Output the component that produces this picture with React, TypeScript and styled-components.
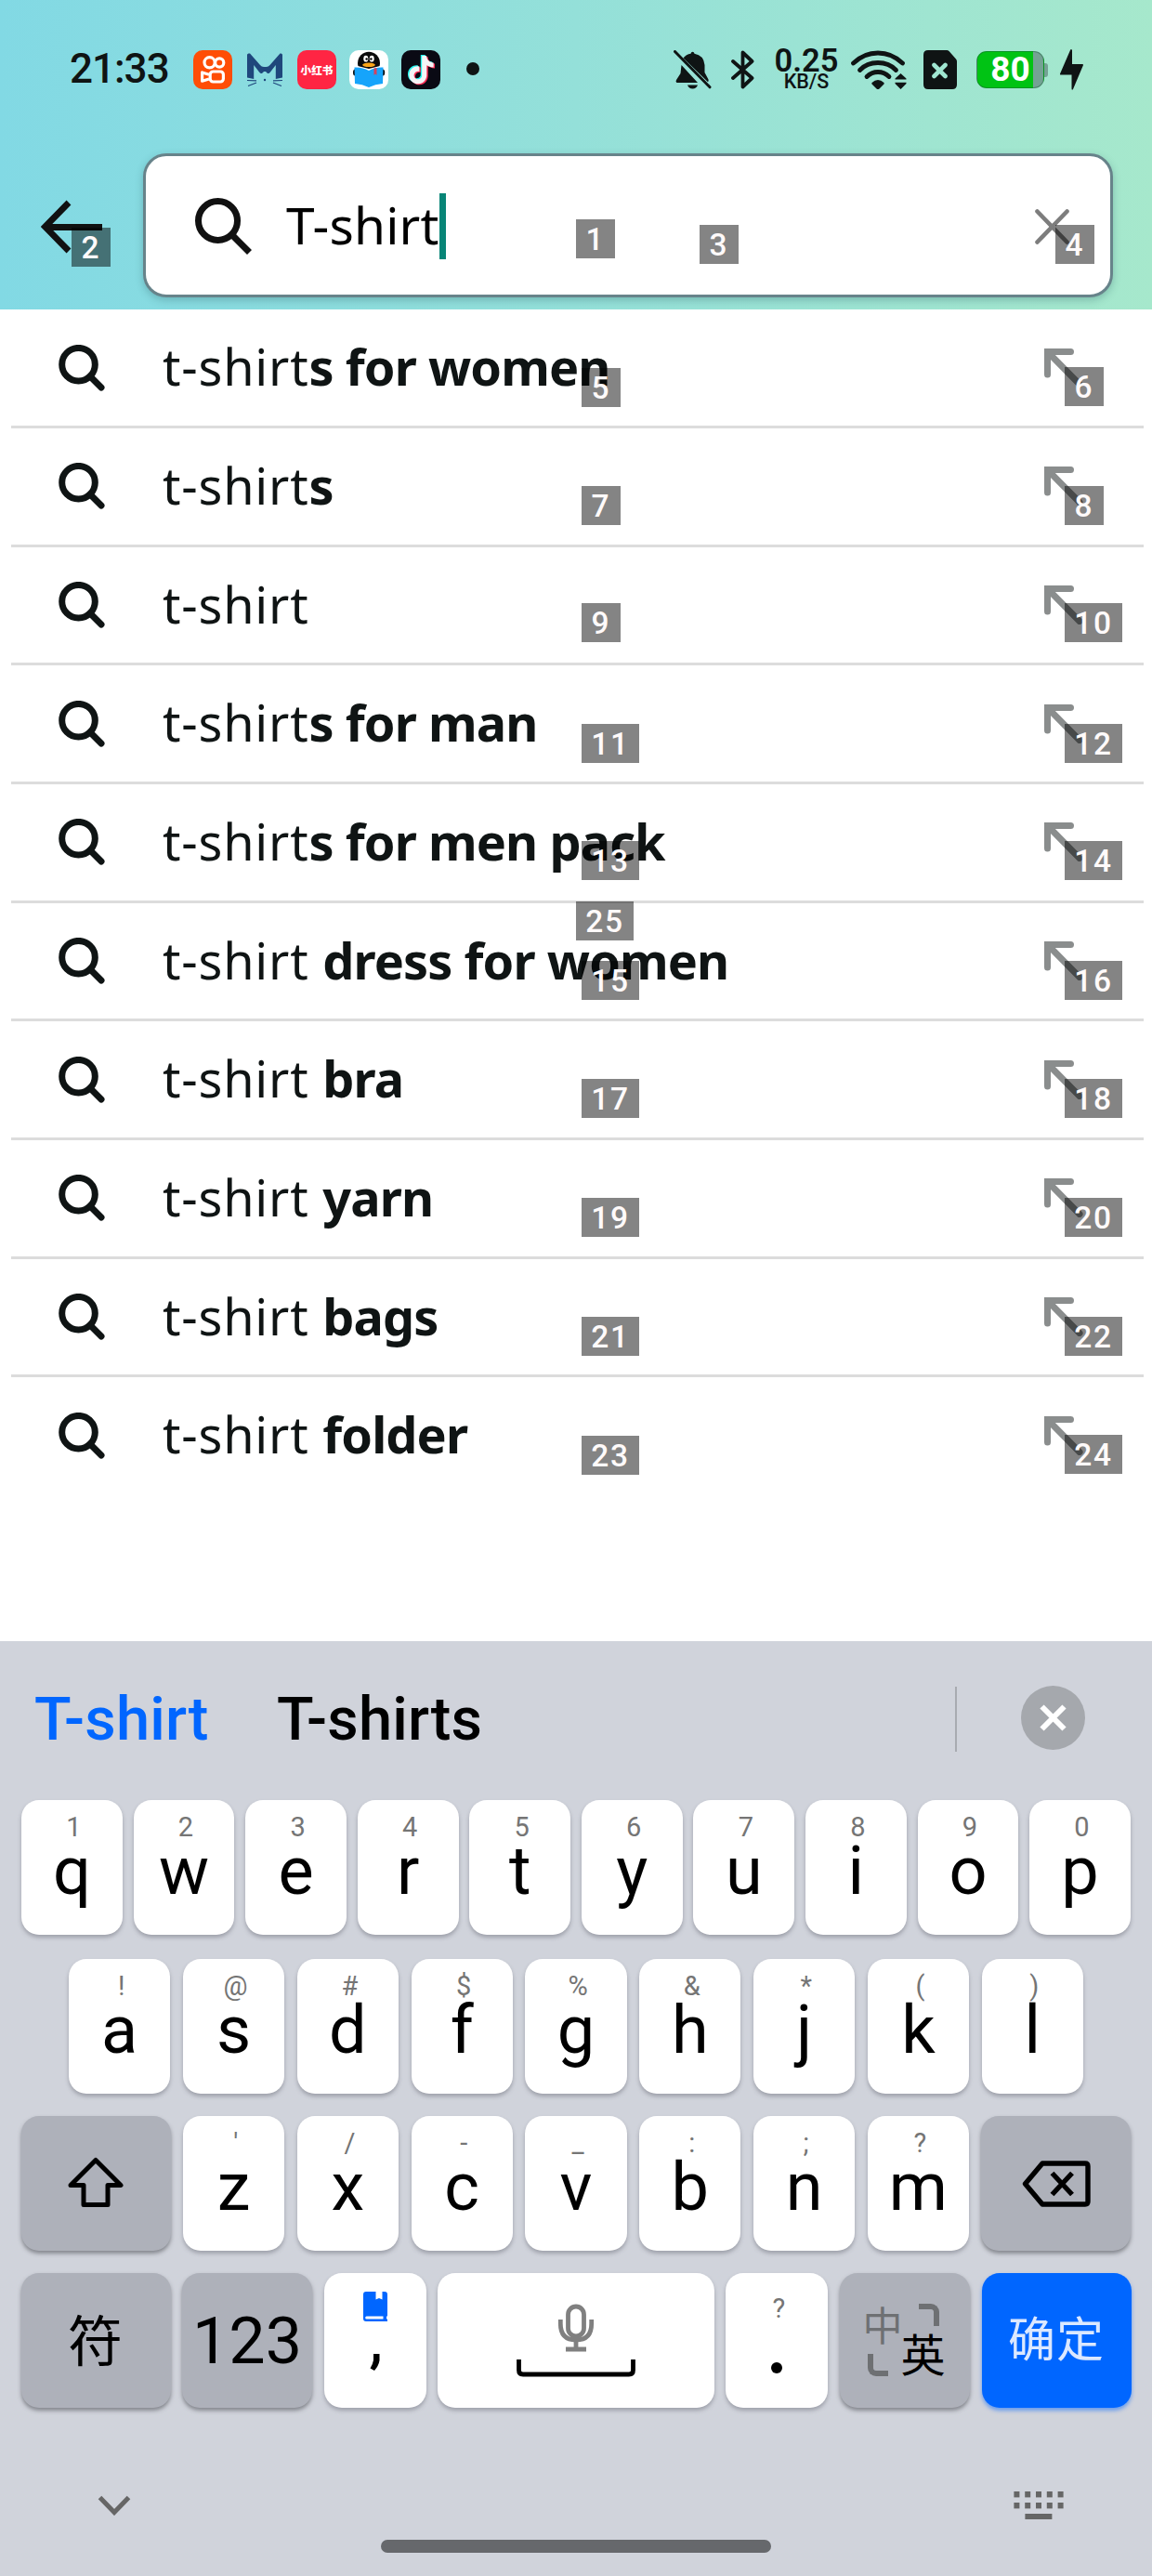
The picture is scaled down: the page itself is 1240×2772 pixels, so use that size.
import React from "react";
import styled, { createGlobalStyle } from "styled-components";

const GlobalStyle = createGlobalStyle`
  * { box-sizing: border-box; }
  body { margin: 0; background: #fff; }
  svg { display: block; flex: none; }
`;

const INK = "#0f1414";
const CJK = `"Noto Sans CJK SC", sans-serif`;

const Screen = styled.div`
  position: relative;
  width: 1240px;
  height: 2772px;
  display: flex;
  flex-direction: column;
  overflow: hidden;
  background: #fff;
  font-family: Roboto, "Noto Sans CJK SC", sans-serif;
`;

/* ---------- header ---------- */

const Header = styled.header`
  height: 333px;
  flex: none;
  background: linear-gradient(90deg, #82d9e4 0%, #94e0d9 50%, #a6e8cc 100%);
`;

const StatusBar = styled.div`
  height: 150px;
  padding: 0 74px 0 75px;
  display: flex;
  align-items: center;
  color: ${INK};
`;

const Clock = styled.div`
  width: 133px;
  font-size: 44px;
  font-weight: 500;
  line-height: 50px;
  letter-spacing: -1px;
  padding-bottom: 2px;
`;

const AppIcons = styled.div`
  display: flex;
  gap: 14px;
`;

const AppTile = styled.div<{ $bg: string }>`
  width: 42px;
  height: 42px;
  border-radius: 10px;
  overflow: hidden;
  background: ${(p) => p.$bg};
  display: flex;
  align-items: center;
  justify-content: center;
  color: #fff;
  font: 900 11.6px/42px ${CJK};
  white-space: nowrap;
`;

const MoreDot = styled.div`
  width: 14px;
  height: 14px;
  margin: -2px 0 0 28px;
  border-radius: 50%;
  background: ${INK};
`;

const Indicators = styled.div`
  margin-left: auto;
  display: flex;
  align-items: center;
`;

const BellSlot = styled.div`
  margin-right: 20px;
`;

const SimSlot = styled.div`
  margin-left: 18px;
`;

const NetSpeed = styled.div`
  width: 70px;
  margin: 0 13px 0 20px;
  display: flex;
  flex-direction: column;
  align-items: center;
  font-weight: 600;
`;

const SpeedValue = styled.span`
  font-size: 34.5px;
  line-height: 26px;
`;

const SpeedUnit = styled.span`
  font-size: 21.5px;
  line-height: 20px;
  font-weight: 500;
`;

const Battery = styled.div`
  display: flex;
  align-items: center;
  margin: 0 13px 0 21px;
`;

const BatteryBody = styled.div<{ $level: number }>`
  width: 73px;
  height: 40px;
  border-radius: 11px;
  border: 1.5px solid rgba(20, 90, 50, 0.45);
  background: linear-gradient(90deg, #00c314 ${(p) => p.$level}%, #74a294 ${(p) => p.$level}%);
  color: #fff;
  font-size: 37px;
  font-weight: 700;
  line-height: 37px;
  text-align: center;
`;

const BatteryTip = styled.div`
  width: 4px;
  height: 15px;
  border-radius: 0 3px 3px 0;
  background: #74a294;
`;

const SearchRow = styled.div`
  display: flex;
  padding: 15px 42px 0 44px;
`;

const BackButton = styled.div`
  width: 110px;
  padding-top: 50px;
`;

const SearchBox = styled.div`
  width: 1044px;
  height: 155px;
  border: 3px solid #67838a;
  border-radius: 25px;
  background: #fff;
  box-shadow: 0 3px 9px rgba(40, 90, 95, 0.3);
  display: flex;
  align-items: center;
  padding: 2px 44px 0 53px;
`;

const Query = styled.span`
  margin-left: 36px;
  padding-bottom: 5px;
  font: 400 55px/71px "Noto Sans", sans-serif;
  letter-spacing: 0.2px;
  color: #000;
`;

const Caret = styled.span`
  width: 7px;
  height: 71px;
  background: #078577;
`;

const ClearIcon = styled.svg`
  margin-left: auto;
`;

/* ---------- suggestions ---------- */

const Suggestions = styled.main`
  height: 1433px;
  flex: none;
  padding: 0.3px 9px 0 12px;
`;

const SuggestionRow = styled.div`
  height: 127.7px;
  border-bottom: 3px solid #dcdcdc;
  display: flex;
  align-items: center;
  padding: 0 62px 0 51px;
  &:last-child { border-bottom-color: transparent; }
`;

const SuggestionText = styled.span`
  margin-left: 62px;
  padding-bottom: 3px;
  font: 400 54px/76px "Noto Sans", sans-serif;
  letter-spacing: 0.8px;
  color: ${INK};
  white-space: pre;
  b { font-weight: 700; letter-spacing: -0.9px; }
`;

const FillArrow = styled.svg`
  margin-left: auto;
`;

/* ---------- numbered tags over the content ---------- */

const Tag = styled.span<{ $x: number; $y: number; $wide: boolean }>`
  position: absolute;
  left: ${(p) => p.$x}px;
  top: ${(p) => p.$y}px;
  width: ${(p) => (p.$wide ? 62 : 42)}px;
  height: 42px;
  background: rgba(0, 0, 0, 0.483);
  color: #fffafa;
  font: 500 33.5px/44px Roboto, sans-serif;
  letter-spacing: 1.8px;
  text-align: center;
`;

/* ---------- keyboard ---------- */

const Keyboard = styled.section`
  flex: 1;
  background: #d0d3db;
  display: flex;
  flex-direction: column;
`;

const CandidateBar = styled.div`
  height: 168px;
  margin-bottom: 3px;
  padding: 0 72px 0 37px;
  display: flex;
  align-items: center;
`;

const Candidate = styled.span<{ $active?: boolean }>`
  width: 261px;
  font-size: 65px;
  font-weight: 500;
  line-height: 80px;
  letter-spacing: 0.2px;
  white-space: nowrap;
  color: ${(p) => (p.$active ? "#0066ff" : "#000")};
`;

const Divider = styled.div`
  width: 2px;
  height: 70px;
  margin-left: auto;
  background: #a8abb1;
`;

const CloseIcon = styled.svg`
  margin: -4px 0 0 69px;
`;

const KeyRow = styled.div<{ $inset: number; $gap: number; $top?: number }>`
  display: flex;
  gap: ${(p) => p.$gap}px;
  height: 145.5px;
  margin-top: ${(p) => p.$top ?? 0}px;
  padding: 0 ${(p) => p.$inset}px;
`;

type Tone = "light" | "dark" | "accent";

const Key = styled.div<{ $w?: number; $tone?: Tone }>`
  ${(p) => (p.$w ? `flex: 0 0 ${p.$w}px;` : "flex: 1 1 0;")}
  min-width: 0;
  height: 145px;
  border-radius: 19px;
  display: flex;
  flex-direction: column;
  align-items: center;
  background: ${(p) =>
    p.$tone === "dark" ? "#aeb1ba" : p.$tone === "accent" ? "#0066ff" : "#fff"};
  box-shadow: 0 3px 4px
    ${(p) =>
      p.$tone === "dark"
        ? "rgba(60, 62, 68, 0.5)"
        : p.$tone === "accent"
          ? "rgba(0, 102, 255, 0.5)"
          : "rgba(90, 94, 104, 0.42)"};
`;

const CenterKey = styled(Key)`
  justify-content: center;
`;

const ShiftKey = styled(CenterKey)`
  padding-bottom: 4px;
`;

const Hint = styled.span<{ $top?: number }>`
  height: 34px;
  margin: ${(p) => p.$top ?? 12}px 0 0 4px;
  font-size: 29px;
  line-height: 34px;
  color: #757575;
`;

const Letter = styled.span`
  margin-top: -9px;
  font-size: 72px;
  line-height: 80px;
  color: #000;
`;

const NumberLabel = styled.span`
  font-size: 70px;
  line-height: 80px;
  color: #000;
`;

const HanLabel = styled.span<{ $size: number; $color: string; $lift: number }>`
  font: 400 ${(p) => p.$size}px/80px ${CJK};
  letter-spacing: 1px;
  color: ${(p) => p.$color};
  padding-bottom: ${(p) => p.$lift}px;
`;

const CommaGlyph = styled.svg`
  margin-top: 35px;
`;

const PeriodDot = styled.span`
  width: 12px;
  height: 12px;
  margin-top: 41px;
  border-radius: 50%;
  background: #000;
`;

const LangGrid = styled.div`
  display: grid;
  grid-template-columns: 40px 47px;
  grid-template-rows: 42px 20px;
  margin: 33px 1px 0 0;
`;

const LangGlyph = styled.span<{ $main?: boolean }>`
  font: 400 ${(p) => (p.$main ? 48 : 43)}px/${(p) => (p.$main ? 20 : 42)}px ${CJK};
  color: ${(p) => (p.$main ? "#000" : "#6e7073")};
  display: flex;
  justify-content: center;
`;

const LangCorner = styled.span<{ $end?: boolean }>`
  width: 22px;
  height: 24px;
  justify-self: ${(p) => (p.$end ? "end" : "start")};
  margin: ${(p) => (p.$end ? "0 6px 0 0" : "12px 0 0 4px")};
  border: 0 solid #6e7073;
  ${(p) =>
    p.$end
      ? "border-top-width: 6px; border-right-width: 6px; border-top-right-radius: 9px;"
      : "border-bottom-width: 6px; border-left-width: 6px; border-bottom-left-radius: 9px;"}
`;

const Toolbar = styled.div`
  display: flex;
  justify-content: space-between;
  align-items: center;
  height: 30px;
  margin-top: 89px;
  padding: 0 95px 0 105px;
`;

const HomeBar = styled.div`
  width: 420px;
  height: 14px;
  margin: 22.5px auto 0;
  border-radius: 7px;
  background: #66686c;
`;

/* ---------- icons ---------- */

const KuaishouIcon = () => (
  <svg width="42" height="42" viewBox="0 0 42 42" fill="none" stroke="#fff" strokeWidth="3.2">
    <circle cx="17.6" cy="13.3" r="5.6" />
    <circle cx="28.2" cy="13.5" r="4.6" />
    <rect x="18.2" y="23" width="14.2" height="11" rx="3.2" />
    <path d="M17 26.2 9.6 24V33.2L17 31" strokeLinejoin="round" />
  </svg>
);

const CatIcon = () => (
  <svg width="42" height="42" viewBox="-2 -3 42 42">
    <path
      fill="#1f477c"
      d="M0 2Q0 0 3 .6L14 13Q15.500 15 18 15H20.500Q23 15 24.500 13L35.500 .6Q38 0 38 2V26.500L30.800 28V13L25 20.500Q23 23 21.500 21.500L20 20H18L16.500 21.500Q15 23 13 20.500L7.200 13V28L0 26.500Z"
    />
    <g stroke="#1f477c" strokeWidth="1.2">
      <path d="M0 29.500 10 29.800M1 35.500 10 32M38 29.500 28 29.800M37 35.500 28 32" />
    </g>
    <circle cx="19" cy="29" r="1.200" fill="#1f477c" />
  </svg>
);

const ReaderIcon = () => (
  <svg width="42" height="42" viewBox="0 0 42 42">
    <ellipse cx="21" cy="14" rx="12" ry="12.300" fill="#0b0b0c" />
    <ellipse cx="6.200" cy="24" rx="2.200" ry="3.500" fill="#0b0b0c" />
    <ellipse cx="36" cy="24" rx="2.200" ry="3.500" fill="#0b0b0c" />
    <path d="M9 17 21 20 33 17V22H9Z" fill="#fff" />
    <ellipse cx="17.800" cy="9.200" rx="2.500" ry="3.400" fill="#fff" />
    <ellipse cx="24.200" cy="9.200" rx="2.500" ry="3.400" fill="#fff" />
    <circle cx="18.600" cy="9.500" r="1.200" />
    <circle cx="23.400" cy="9.500" r="1.200" />
    <ellipse cx="21" cy="15.800" rx="6.800" ry="2.300" fill="#f9a51a" />
    <path d="M5.500 18.500Q14 18 21 22Q28 18 36.500 18.500L36 36Q28 36.500 21 40Q14 36.500 6 36Z" fill="#16a4fb" />
    <path d="M26.500 19.500 29.500 19V27L28 25.500 26.500 27Z" fill="#d8415c" />
  </svg>
);

const NOTE =
  "M12.525.02c1.310-.02 2.610-.01 3.910-.02.080 1.530.630 3.090 1.750 4.170 1.120 1.110 2.700 1.620 4.240 1.790v4.030c-1.440-.050-2.890-.350-4.200-.970-.570-.260-1.100-.590-1.620-.930-.010 2.920.010 5.840-.020 8.750-.080 1.400-.540 2.790-1.350 3.940-1.310 1.920-3.580 3.170-5.910 3.210-1.430.080-2.860-.310-4.080-1.030-2.020-1.190-3.440-3.370-3.650-5.710-.020-.500-.030-1-.010-1.490.180-1.900 1.120-3.720 2.580-4.960 1.660-1.440 3.980-2.130 6.150-1.720.020 1.480-.040 2.960-.040 4.440-.990-.320-2.150-.230-3.020.370-.630.410-1.110 1.040-1.360 1.750-.210.510-.150 1.070-.140 1.610.240 1.640 1.820 3.020 3.500 2.870 1.120-.010 2.190-.660 2.770-1.610.190-.330.400-.670.410-1.060.100-1.790.060-3.570.070-5.360.010-4.030-.010-8.050.020-12.070z";

const TikTokIcon = () => (
  <svg width="42" height="42" viewBox="0 0 42 42">
    <path d={NOTE} fill="#25f4ee" transform="translate(5 5) scale(1.26)" />
    <path d={NOTE} fill="#fe2c55" transform="translate(7.800 7) scale(1.260)" />
    <path d={NOTE} fill="#f4f4f6" transform="translate(6.400 6) scale(1.260)" />
  </svg>
);

const BellOffIcon = () => (
  <svg width="42" height="42" viewBox="0 0 42 42" fill={INK}>
    <path d="M10.500 8.500Q13.500 4.500 18.500 3.800Q19 1.800 20.500 1.800Q22 1.800 22.500 3.800Q32.500 5.500 33.500 16V24L37.500 31.500Q38 33 37 34.200Z" />
    <path d="M8.500 16 26 35H3.500Q1.800 34 3 32L7.500 25Z" />
    <path d="M15 37.500H26Q24.500 41.500 20.500 41.500Q16.500 41.500 15 37.500Z" />
    <path d="M1.500 1.500 39 39.800" stroke={INK} strokeWidth="3" strokeLinecap="round" />
  </svg>
);

const BluetoothIcon = () => (
  <svg
    width="26"
    height="42"
    viewBox="0 0 26 42"
    fill="none"
    stroke={INK}
    strokeWidth="3.800"
    strokeLinejoin="round"
    strokeLinecap="round"
  >
    <path d="M2 12 22.500 30 12.500 39.500V2.500L22.500 12 2 30" />
  </svg>
);

const WifiIcon = () => (
  <svg width="60" height="42" viewBox="0 0 60 42" fill="none" stroke={INK} strokeWidth="4.800">
    <g strokeLinecap="round">
      <path d="M2.500 14Q14 3 29 3T55.500 14" />
      <path d="M9.500 21.500Q17 13.500 29 13.500T48.500 21.500" />
      <path d="M17 28.500Q22 23.500 29 23.500T41 28.500" />
    </g>
    <path d="M22.500 35Q29 29 35.500 35Q36 36 35 37L30.500 41.500Q29 42.500 27.500 41.500L23 37Q22 36 22.500 35Z" fill={INK} stroke="none" />
    <path d="M53.500 25 59.500 30.500V31.500H47.500V30.500ZM53.500 42 59.500 36V34.800H47.500V36Z" fill={INK} stroke="none" />
  </svg>
);

const SimIcon = () => (
  <svg width="36" height="42" viewBox="0 0 36 42">
    <path d="M5 0H25Q26.500 0 27.500 1L35 9.500Q36 10.500 36 12V37Q36 42 31 42H5Q0 42 0 37V5Q0 0 5 0Z" fill={INK} />
    <path d="M11.500 16 23.500 28M23.500 16 11.500 28" stroke="#a0e6d1" strokeWidth="4.600" strokeLinecap="round" />
  </svg>
);

const BoltIcon = () => (
  <svg width="25" height="44" viewBox="0 0 25 44" fill={INK}>
    <path d="M12 0Q13 0 13 1.500V16H24Q25.500 16 24.800 17.500L14 43Q12.500 45 12.500 42V27.500H1Q-.5 27.500.2 26L11 1Q11.500 0 12 0Z" />
  </svg>
);

const Magnifier = ({ large }: { large?: boolean }) =>
  large ? (
    <svg width="62" height="62" viewBox="0 0 62 62" fill="none" stroke="#111" strokeWidth="7">
      <circle cx="24.500" cy="24.500" r="21" />
      <path d="M39 39 58.500 58.500" />
    </svg>
  ) : (
    <svg width="50" height="50" viewBox="0 0 50 50" fill="none" stroke={INK} strokeWidth="7">
      <circle cx="21.500" cy="21.200" r="17.800" />
      <path d="M34 34 46 46" strokeLinecap="round" />
    </svg>
  );

const MicSpaceIcon = () => (
  <svg width="128" height="80" viewBox="0 0 128 80" fill="none">
    <g stroke="#808080" strokeWidth="4.800">
      <rect x="55.500" y="3" width="17" height="32" rx="8.500" />
      <path d="M47.300 17V21.500Q47.300 39 64 39T80.700 21.500V17M64 39V47M53 49H75" />
    </g>
    <path d="M2.500 60V71.500Q2.500 76 7 76H121Q125.500 76 125.500 71.500V60" stroke="#000" strokeWidth="4.800" />
  </svg>
);

/* ---------- data ---------- */

const suggestions: [string, string][] = [
  ["t-shirt", "s for women"],
  ["t-shirt", "s"],
  ["t-shirt", ""],
  ["t-shirt", "s for man"],
  ["t-shirt", "s for men pack"],
  ["t-shirt ", "dress for women"],
  ["t-shirt ", "bra"],
  ["t-shirt ", "yarn"],
  ["t-shirt ", "bags"],
  ["t-shirt ", "folder"],
];

const tags: [number, number, number][] = [
  [1, 620, 236], [2, 77, 245], [3, 753, 242], [4, 1136, 242],
  [5, 626, 396], [6, 1146, 395], [7, 626, 523], [8, 1146, 523],
  [9, 626, 649], [10, 1146, 649], [11, 626, 779], [12, 1146, 779],
  [13, 626, 905], [14, 1146, 905], [15, 626, 1034], [16, 1146, 1034],
  [17, 626, 1161], [18, 1146, 1161], [19, 626, 1289], [20, 1146, 1289],
  [21, 626, 1417], [22, 1146, 1417], [23, 626, 1545], [24, 1146, 1544],
  [25, 620, 970],
];

const topRow = ["q1", "w2", "e3", "r4", "t5", "y6", "u7", "i8", "o9", "p0"];
const homeRow = ["a!", "s@", "d#", "f$", "g%", "h&", "j*", "k(", "l)"];
const bottomRow = ["z'", "x/", "c-", "v_", "b:", "n;", "m?"];

const renderKeys = (keys: string[]) =>
  keys.map(([letter, hint]) => (
    <Key key={letter}>
      <Hint>{hint}</Hint>
      <Letter>{letter}</Letter>
    </Key>
  ));

export default function App() {
  return (
    <Screen>
      <GlobalStyle />
      <Header>
        <StatusBar>
          <Clock>21:33</Clock>
          <AppIcons>
            <AppTile $bg="#ff4d06"><KuaishouIcon /></AppTile>
            <AppTile $bg="transparent"><CatIcon /></AppTile>
            <AppTile $bg="#ff2543">小红书</AppTile>
            <AppTile $bg="#fff"><ReaderIcon /></AppTile>
            <AppTile $bg="#0a0a14"><TikTokIcon /></AppTile>
          </AppIcons>
          <MoreDot />
          <Indicators>
            <BellSlot><BellOffIcon /></BellSlot>
            <BluetoothIcon />
            <NetSpeed>
              <SpeedValue>0.25</SpeedValue>
              <SpeedUnit>KB/S</SpeedUnit>
            </NetSpeed>
            <WifiIcon />
            <SimSlot><SimIcon /></SimSlot>
            <Battery>
              <BatteryBody $level={84}>80</BatteryBody>
              <BatteryTip />
            </Battery>
            <BoltIcon />
          </Indicators>
        </StatusBar>
        <SearchRow>
          <BackButton>
            <svg width="68" height="58" viewBox="0 0 68 58" fill="none" stroke="#111" strokeWidth="6.800">
              <path d="M30 3 4.500 29 30 55M4 29.500H66" />
            </svg>
          </BackButton>
          <SearchBox>
            <Magnifier large />
            <Query>T-shirt</Query>
            <Caret />
            <ClearIcon width="37" height="38" viewBox="0 0 37 38" stroke="#7d7d7d" strokeWidth="4.600" strokeLinecap="round">
              <path d="M2.500 2.500 34.500 35.500M34.500 2.500 2.500 35.500" />
            </ClearIcon>
          </SearchBox>
        </SearchRow>
      </Header>

      <Suggestions>
        {suggestions.map(([typed, rest]) => (
          <SuggestionRow key={typed + rest}>
            <Magnifier />
            <SuggestionText>
              {typed}
              <b>{rest}</b>
            </SuggestionText>
            <FillArrow width="45" height="42" viewBox="0 0 45 42" fill="none" stroke="#8a8d8d" strokeWidth="7" strokeLinecap="round">
              <path d="M3.500 28V3.500H28.500M4 4 38 38.500" />
            </FillArrow>
          </SuggestionRow>
        ))}
      </Suggestions>

      <Keyboard>
        <CandidateBar>
          <Candidate $active>T-shirt</Candidate>
          <Candidate>T-shirts</Candidate>
          <Divider />
          <CloseIcon width="69" height="69" viewBox="0 0 69 69">
            <circle cx="34.500" cy="34.500" r="34.500" fill="#a5a8ad" />
            <path d="M22.500 22.500 46.500 46.500M46.500 22.500 22.500 46.500" stroke="#fff" strokeWidth="6" />
          </CloseIcon>
        </CandidateBar>

        <KeyRow $inset={23} $gap={11.7}>{renderKeys(topRow)}</KeyRow>
        <KeyRow $inset={74} $gap={13.6} $top={25}>{renderKeys(homeRow)}</KeyRow>
        <KeyRow $inset={22.5} $gap={13.6} $top={24}>
          <ShiftKey $w={161} $tone="dark">
            <svg width="60" height="54" viewBox="0 0 60 54" fill="none" stroke="#000" strokeWidth="5" strokeLinejoin="round">
              <path d="M30 3.500 57 30.500H43V51.500H17V30.500H3Z" />
            </svg>
          </ShiftKey>
          {renderKeys(bottomRow)}
          <CenterKey $w={161} $tone="dark">
            <svg width="74" height="50" viewBox="0 0 74 50" fill="none" stroke="#000" strokeWidth="5.400" strokeLinejoin="round">
              <path d="M22 3H68Q71 3 71 6V44Q71 47 68 47H22L3.500 25Z" />
              <path d="M32.500 13.500 54 36.500M54 13.500 32.500 36.500" />
            </svg>
          </CenterKey>
        </KeyRow>
        <KeyRow $inset={22.5} $gap={12.8} $top={23.5}>
          <CenterKey $w={161} $tone="dark">
            <HanLabel $size={59} $color="#000" $lift={6}>符</HanLabel>
          </CenterKey>
          <CenterKey $w={139.5} $tone="dark">
            <NumberLabel>123</NumberLabel>
          </CenterKey>
          <Key $w={110}>
            <svg width="26" height="52" viewBox="0 -20 26 52">
              <path fill="#0066ff" fillRule="evenodd" d="M3 0H13.500V8.500L17 7 20.500 8.500V0H23Q26 0 26 3V26.500H25V29.500H26V32H3Q0 32 0 29V3Q0 0 3 0ZM3.500 26.500Q2.200 26.500 2.200 28T3.500 29.500H21.500V26.500Z" />
            </svg>
            <CommaGlyph width="11" height="18" viewBox="0 0 11 18">
              <path d="M4 0H10.500V7Q9.500 13 5 18L.5 15.500Q3.800 10 4 6Z" />
            </CommaGlyph>
          </Key>
          <CenterKey>
            <MicSpaceIcon />
          </CenterKey>
          <Key $w={110}>
            <Hint $top={21}>?</Hint>
            <PeriodDot />
          </Key>
          <Key $w={139.5} $tone="dark">
            <LangGrid>
              <LangGlyph>中</LangGlyph>
              <LangCorner $end />
              <LangCorner />
              <LangGlyph $main>英</LangGlyph>
            </LangGrid>
          </Key>
          <CenterKey $w={161} $tone="accent">
            <HanLabel $size={51} $color="#dbe8ff" $lift={10}>确定</HanLabel>
          </CenterKey>
        </KeyRow>

        <Toolbar>
          <svg width="36" height="22" viewBox="0 0 36 22" fill="none" stroke="#666" strokeWidth="5">
            <path d="M2.500 2.500 18 18.500 33.500 2.500" />
          </svg>
          <svg width="54" height="30" viewBox="0 0 54 30" fill="#666">
            {[0, 12].map((y) =>
              [0, 11.8, 23.6, 35.4, 47.2].map((x) => <rect key={`${x}-${y}`} x={x + 0.4} y={y} width="6" height="6.400" />)
            )}
            <rect x="12.400" y="24" width="29" height="6" />
          </svg>
        </Toolbar>
        <HomeBar />
      </Keyboard>

      {tags.map(([n, x, y]) => (
        <Tag key={n} $x={x} $y={y} $wide={n > 9}>
          {n}
        </Tag>
      ))}
    </Screen>
  );
}
